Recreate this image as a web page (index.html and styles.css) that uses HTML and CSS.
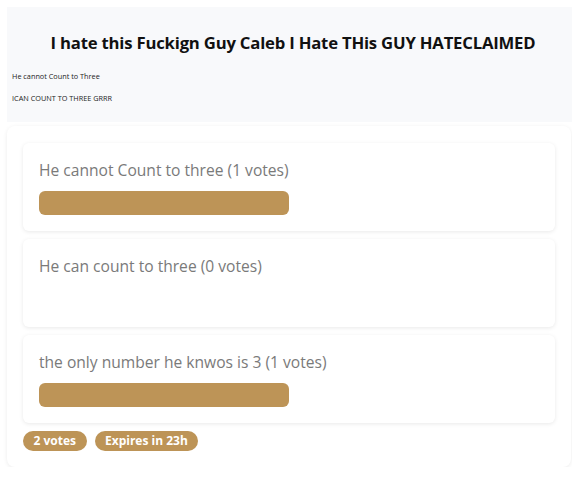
FILE: index.html
```html
<!DOCTYPE html>
<html>
<head>
<meta charset="utf-8">
<link rel="stylesheet" href="styles.css">
</head>
<body>
<header class="poll-header">
  <h1 class="poll-title">I hate this Fuckign Guy Caleb I Hate THis GUY HATECLAIMED</h1>
  <p class="poll-desc">He cannot Count to Three</p>
  <p class="poll-desc">ICAN COUNT TO THREE GRRR</p>
</header>
<main class="poll-card">
  <div class="option">
    <div class="option-label">He cannot Count to three (1 votes)</div>
    <div class="bar-track"><div class="bar-fill" style="width:50%"></div></div>
  </div>
  <div class="option">
    <div class="option-label">He can count to three (0 votes)</div>
    <div class="bar-track"><div class="bar-fill" style="width:0%"></div></div>
  </div>
  <div class="option">
    <div class="option-label">the only number he knwos is 3 (1 votes)</div>
    <div class="bar-track"><div class="bar-fill" style="width:50%"></div></div>
  </div>
  <div class="badges">
    <span class="badge">2 votes</span>
    <span class="badge">Expires in 23h</span>
  </div>
</main>
</body>
</html>
```
FILE: styles.css
```css
html, body {
  overflow-x: hidden;
}
body {
  margin: 0;
  padding: 7px 0 0 7px;
  background: #ffffff;
  font-family: "Open Sans", "Noto Sans", sans-serif;
}
.poll-header {
  width: 580px;
  box-sizing: border-box;
  height: 115px;
  background: #f8f9fb;
  padding: 22px 0 0 0;
  margin-bottom: 4px;
}
.poll-title {
  margin: 0 0 13px 0;
  width: 572px;
  text-align: center;
  font-size: 16.7px;
  line-height: 28px;
  font-weight: 700;
  color: #111;
  letter-spacing: -0.2px;
}
.poll-desc {
  margin: 0 0 10px 0;
  padding-left: 5px;
  font-size: 7.3px;
  line-height: 12px;
  color: #222;
}
.poll-card {
  width: 564px;
  box-sizing: border-box;
  background: #fff;
  border-radius: 8px;
  box-shadow: 0 1px 4px rgba(0,0,0,0.08);
  padding: 17px 16px 16px 16px;
  display: flex;
  flex-direction: column;
  gap: 8px;
}
.option {
  background: #fff;
  border-radius: 6px;
  box-shadow: 0 1px 4px rgba(0,0,0,0.09);
  padding: 16px;
  display: flex;
  flex-direction: column;
}
.option-label {
  font-size: 15.6px;
  line-height: 22px;
  color: #7a7a7a;
  margin-bottom: 10px;
}
.bar-track {
  height: 24px;
}
.bar-fill {
  height: 100%;
  background: #bd9457;
  border-radius: 6px;
}
.badges {
  display: flex;
  gap: 8px;
}
.badge {
  background: #bd9457;
  color: #fff;
  font-size: 12px;
  font-weight: 700;
  line-height: 20px;
  padding: 0 10.5px;
  border-radius: 10px;
}
```
